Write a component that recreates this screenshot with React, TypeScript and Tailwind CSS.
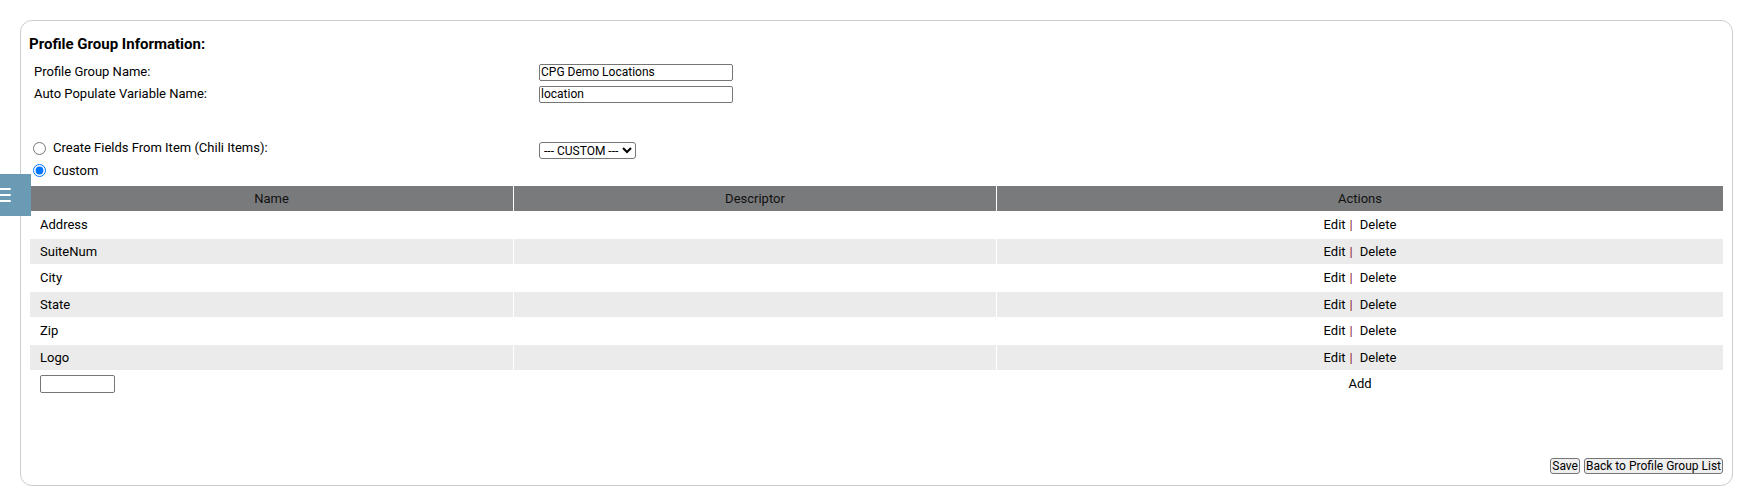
import { useState } from "react";

type Field = { name: string; descriptor: string };

const fields: Field[] = [
  { name: "Address", descriptor: "" },
  { name: "SuiteNum", descriptor: "" },
  { name: "City", descriptor: "" },
  { name: "State", descriptor: "" },
  { name: "Zip", descriptor: "" },
  { name: "Logo", descriptor: "" },
];

const App = () => {
  const [mode, setMode] = useState("custom");

  return (
    <main className="relative w-full h-[503px] bg-white font-['Roboto',sans-serif] text-[13px] text-black">
      {/* side menu tab */}
      <div className="absolute left-0 top-[154px] w-[31px] h-[42px] bg-[#6a9ab4] z-10">
        <div className="absolute left-0 top-[14px] w-[11px] h-[2px] bg-white rounded-r-[1px]" />
        <div className="absolute left-0 top-[20px] w-[11px] h-[2px] bg-white rounded-r-[1px]" />
        <div className="absolute left-0 top-[26px] w-[11px] h-[2px] bg-white rounded-r-[1px]" />
      </div>

      <section className="ml-[20px] mt-[20px] w-[1713px] h-[466px] border border-[#cccccc] rounded-[12px] flex flex-col px-[9px] pt-[15px] pb-[11px]">
        <h2 className="-ml-px font-bold text-[15px] leading-[16px] text-black">Profile Group Information:</h2>

        <div className="mt-[9px] grid grid-cols-[509px_1fr]">
          <div className="h-[22px] flex items-center pl-[4px]">Profile Group Name:</div>
          <div className="h-[22px] flex items-center">
            <input
              defaultValue="CPG Demo Locations"
              className="w-[194px] h-[17px] border border-[#767676] rounded-[2px] px-[1px] text-[12px] leading-[15px] text-black"
            />
          </div>
          <div className="h-[22px] flex items-center pl-[4px]">Auto Populate Variable Name:</div>
          <div className="h-[22px] flex items-center">
            <input
              defaultValue="location"
              className="w-[194px] h-[17px] border border-[#767676] rounded-[2px] px-[1px] text-[12px] leading-[15px] text-black"
            />
          </div>

          <div className="h-[34px]" />
          <div className="h-[34px]" />

          <label className="h-[22px] flex items-start pt-[1px] pl-[3px]">
            <span className="flex items-center h-[16px]">
              <input
                type="radio"
                name="mode"
                checked={mode === "chili"}
                onChange={() => setMode("chili")}
                className="w-[13px] h-[13px] m-0"
              />
              <span className="ml-[7px]">Create Fields From Item (Chili Items):</span>
            </span>
          </label>
          <div className="h-[22px] flex items-center">
            <select
              defaultValue="custom"
              className="w-[97px] h-[17px] border border-[#767676] rounded-[3px] text-[12px] text-black"
            >
              <option value="custom">--- CUSTOM ---</option>
            </select>
          </div>

          <label className="h-[20px] flex items-center pl-[3px]">
            <input
              type="radio"
              name="mode"
              checked={mode === "custom"}
              onChange={() => setMode("custom")}
              className="w-[13px] h-[13px] m-0 -mt-[2px]"
            />
            <span className="ml-[7px]">Custom</span>
          </label>
          <div className="h-[20px]" />
        </div>

        {/* fields table */}
        <div className="mt-[5px] flex flex-col gap-y-[1.5px]">
          <div className="grid grid-cols-[483px_482px_1fr] gap-x-px h-[25px] text-[#111111]">
            <div className="bg-[#797a7b] flex items-center justify-center">Name</div>
            <div className="bg-[#797a7b] flex items-center justify-center">Descriptor</div>
            <div className="bg-[#797a7b] flex items-center justify-center">Actions</div>
          </div>

          {fields.map((f, i) => {
            const bg = i % 2 === 1 ? "bg-[#eaebea]" : "bg-white";
            return (
              <div key={f.name} className="grid grid-cols-[483px_482px_1fr] gap-x-px h-[25px]">
                <div className={`${bg} flex items-center pl-[10px]`}>{f.name}</div>
                <div className={`${bg} flex items-center pl-[10px]`}>{f.descriptor}</div>
                <div className={`${bg} flex items-center justify-center`}>
                  <span className="cursor-pointer">Edit</span>
                  <span className="ml-[4px] text-[#8b1538]">|</span>
                  <span className="ml-[7px] cursor-pointer">Delete</span>
                </div>
              </div>
            );
          })}

          <div className="grid grid-cols-[483px_482px_1fr] gap-x-px h-[25px]">
            <div className="flex items-center pl-[10px]">
              <input className="w-[75px] h-[18px] border border-[#767676] rounded-[2px] px-[1px] text-[12px]" />
            </div>
            <div />
            <div className="flex items-center justify-center cursor-pointer">Add</div>
          </div>
        </div>

        <div className="mt-auto flex justify-end gap-[4px]">
          <button className="h-[16px] leading-[14px] px-[1px] border border-[#767676] rounded-[3px] bg-[#efefef] text-[12px] text-black">
            Save
          </button>
          <button className="h-[16px] leading-[14px] px-[1px] border border-[#767676] rounded-[3px] bg-[#efefef] text-[12px] text-black">
            Back to Profile Group List
          </button>
        </div>
      </section>
    </main>
  );
};

export default App;
